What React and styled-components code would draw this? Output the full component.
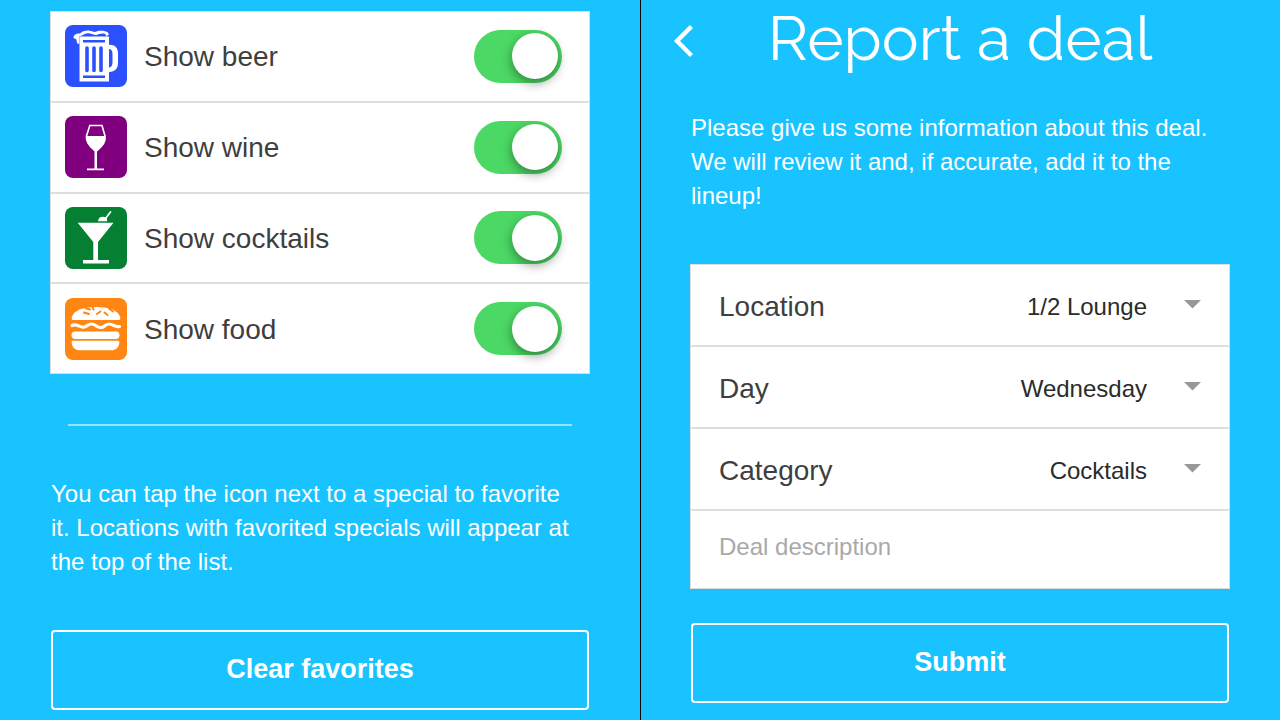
import { useState } from "react";
import styled, { createGlobalStyle } from "styled-components";

const colors = {
  sky: "#18c3ff",
  white: "#ffffff",
  line: "#dedede",
  text: "#3e3e3e",
  value: "#2b2b2b",
  muted: "#a9a9a9",
  caret: "#989898",
  green: "#4cd864",
};

const GlobalStyle = createGlobalStyle`
  *,
  *::before,
  *::after {
    box-sizing: border-box;
  }

  body {
    margin: 0;
    background-color: ${colors.sky};
    font-family: "Liberation Sans", Arial, sans-serif;
  }
`;

const Page = styled.div`
  display: grid;
  grid-template-columns: 1fr 1fr;
  min-height: 100vh;
`;

const Screen = styled.section`
  padding: 11px 50px 9px;
  background-color: ${colors.sky};

  & + & {
    box-shadow: inset 1px 0 #000000;
  }
`;

const Card = styled.div`
  display: grid;
  gap: 2px;
  border: 1px solid ${colors.line};
  background-color: ${colors.line};
`;

const ToggleCard = styled(Card)`
  grid-auto-rows: 1fr;
  min-height: 363px;
`;

const ToggleRow = styled.label`
  display: flex;
  align-items: center;
  gap: 17px;
  padding: 0 27px 0 14px;
  background-color: ${colors.white};
  color: ${colors.text};
  font-size: 28px;
  line-height: 32px;
  cursor: pointer;
`;

const ToggleLabel = styled.span`
  flex: 1;
  padding-top: 2px;
`;

const Tile = styled.svg`
  width: 62px;
  height: 62px;
  border-radius: 8px;
  background-color: ${({ $color }) => $color};
`;

const Switch = styled.input`
  appearance: none;
  display: flex;
  align-items: center;
  width: 88px;
  height: 53px;
  margin: 0;
  padding: 0 4px;
  border-radius: 27px;
  background-color: ${colors.line};
  cursor: pointer;

  &::after {
    content: "";
    width: 46px;
    height: 46px;
    border-radius: 50%;
    background-color: ${colors.white};
    box-shadow: 0 4px 11px rgba(0, 0, 0, 0.4);
  }

  &:checked {
    justify-content: flex-end;
    background-color: ${colors.green};
  }
`;

const Divider = styled.hr`
  height: 2px;
  margin: 50px 18px 51px;
  border: 0;
  background-color: rgba(255, 255, 255, 0.55);
`;

const Copy = styled.p`
  margin: 0 10px 51px 1px;
  color: ${colors.white};
  font-size: 24px;
  line-height: 34px;
`;

const OutlineButton = styled.button`
  display: block;
  width: calc(100% - 2px);
  height: 80px;
  margin: 0 1px;
  padding: 0 0 2px;
  border: 2px solid ${colors.white};
  border-radius: 4px;
  background-color: transparent;
  color: ${colors.white};
  font-family: inherit;
  font-size: 27px;
  font-weight: 700;
  line-height: 32px;
  cursor: pointer;
`;

const Header = styled.header`
  display: grid;
  grid-template-columns: 20px 1fr 20px;
  align-items: center;
  height: 60px;
  margin: 0 -17px 40px;
`;

const BackButton = styled.button`
  display: flex;
  padding: 0;
  border: 0;
  background-color: transparent;
  cursor: pointer;
`;

const Title = styled.h1`
  margin: 0;
  padding-bottom: 4px;
  color: ${colors.white};
  font-family: Raleway, "Open Sans", sans-serif;
  font-size: 62px;
  font-weight: 400;
  line-height: 56px;
  text-align: center;
`;

const FormCard = styled(Card)`
  margin-bottom: 34px;
`;

const Field = styled.div`
  display: flex;
  align-items: center;
  height: 80px;
  padding: 4px 28px 0;
  background-color: ${colors.white};
`;

const FieldLabel = styled.label`
  color: ${colors.text};
  font-size: 28px;
  line-height: 32px;
`;

const Select = styled.select`
  appearance: none;
  flex: 1;
  min-width: 0;
  padding: 0;
  border: 0;
  background-color: transparent;
  color: ${colors.value};
  font-family: inherit;
  font-size: 24px;
  line-height: 32px;
  text-align-last: right;
`;

const Caret = styled.svg`
  width: 17px;
  height: 9px;
  margin: 0 0 6px 37px;
  fill: ${colors.caret};
`;

const DescriptionInput = styled.input`
  width: 100%;
  height: 77px;
  padding: 0 28px 6px;
  border: 0;
  border-radius: 0;
  background-color: ${colors.white};
  color: ${colors.value};
  font-family: inherit;
  font-size: 24px;

  &::placeholder {
    color: ${colors.muted};
    opacity: 1;
  }
`;

const BeerIcon = () => (
  <Tile $color="#2b50ff" viewBox="0 0 62 62" aria-hidden="true">
    <path
      d="M8.500 13C8.500 10 11 8.300 15 8.600C17 6.500 20.500 5.200 24 5.600C26.500 6 28.500 7.200 30 7C33 5.500 37 5.600 40 6.200C42.500 6.700 44 8 43.700 10L41 11L40.500 9C37 7.800 34 9 31.500 10C27.500 10 25.500 8 22.500 8.300C19 8.600 17.500 11 14.300 11.300V19L12 18.200L11.500 14.500Z"
      fill="#fff"
    />
    <path d="M14.500 11.500H44V19.700C50 19.500 53 23 53 28V38C53 43.500 50 47 44 47V56.500H14.500ZM44 24V42.500C46.500 42.500 47.500 40 47.500 37V29C47.500 26 46.500 24 44 24Z" fill="#fff" fillRule="evenodd" />
    <path
      d="M18 16.200H40M18 51.800H40"
      stroke="#2b50ff"
      strokeWidth="2.400"
    />
    <path
      d="M22 23V45.500M29 23V45.500M36 23V45.500"
      stroke="#2b50ff"
      strokeWidth="3.600"
      strokeLinecap="round"
    />
  </Tile>
);

const WineIcon = () => (
  <Tile $color="#800080" viewBox="0 0 62 62" aria-hidden="true">
    <path
      d="M24.800 9.500H37L40 20C41 26 38 30 32 34.500H29.500C24 30 20.500 26 21.500 20Z"
      fill="none"
      stroke="#fff"
      strokeWidth="1.600"
    />
    <path d="M21.500 20H40C41 26 38 30 32 34.500V52.500H39V54.300H22V52.500H29.500V34.500C24 30 20.500 26 21.500 20Z" fill="#fff" />
  </Tile>
);

const CocktailIcon = () => (
  <Tile $color="#058033" viewBox="0 0 62 62" aria-hidden="true">
    <path d="M12.700 15.800H48.500L33 35V53H44V56.500H18V53H28.300V35Z" fill="#fff" />
    <path d="M33 14.300C33 11.500 35 9.700 38 9.800L42 10.500V14.300Z" fill="#fff" />
    <path d="M40.500 11.500L45.500 5" stroke="#fff" strokeWidth="1.800" strokeLinecap="round" />
  </Tile>
);

const BurgerIcon = () => (
  <Tile $color="#ff8613" viewBox="0 0 62 62" aria-hidden="true">
    <path d="M8 22C6.500 22 6.500 20 7 18.500C9.500 12 19 9 31 9C43 9 52.500 12 55 18.500C55.500 20 55.500 22 54 22Z" fill="#fff" />
    <path
      d="M19 14.500L24 16M20.500 10L25 11.500M27.500 8.500L28.500 11.500M32 16L35.500 13.500M39.500 14.500L42.500 17M44 10.500L48 13.500"
      stroke="#ff8613"
      strokeWidth="2"
      strokeLinecap="round"
    />
    <path
      d="M7 27.500C11.500 25 14 29.500 18.500 29.200C22 29 22.500 26 26.500 26C31 26 31 29.500 35.500 29.500C40 29.500 40 26 44 26C48.500 26 49 29.500 54.500 28.500"
      fill="none"
      stroke="#fff"
      strokeWidth="3.200"
      strokeLinecap="round"
    />
    <rect x="6.500" y="33.500" width="48" height="7.500" rx="3.700" fill="#fff" />
    <path d="M8 42.800H53C54.500 42.800 54.500 44 54.200 45.500C53.500 50 50.500 52.300 46 52.300H15C10.500 52.300 7.500 50 6.800 45.500C6.500 44 6.500 42.800 8 42.800Z" fill="#fff" />
  </Tile>
);

const categories = [
  { name: "beer", Icon: BeerIcon },
  { name: "wine", Icon: WineIcon },
  { name: "cocktails", Icon: CocktailIcon },
  { name: "food", Icon: BurgerIcon },
];

const SelectField = ({ id, label, value }) => (
  <Field>
    <FieldLabel htmlFor={id}>{label}</FieldLabel>
    <Select id={id} defaultValue={value}>
      <option>{value}</option>
    </Select>
    <Caret viewBox="0 0 17 9" aria-hidden="true">
      <path d="M0 0H17L8.500 8.500Z" />
    </Caret>
  </Field>
);

const Settings = () => {
  const [shown, setShown] = useState({
    beer: true,
    wine: true,
    cocktails: true,
    food: true,
  });

  return (
    <Screen>
      <ToggleCard>
        {categories.map(({ name, Icon }) => (
          <ToggleRow key={name}>
            <Icon />
            <ToggleLabel>Show {name}</ToggleLabel>
            <Switch
              type="checkbox"
              checked={shown[name]}
              onChange={() => setShown({ ...shown, [name]: !shown[name] })}
            />
          </ToggleRow>
        ))}
      </ToggleCard>
      <Divider />
      <Copy>
        You can tap the icon next to a special to favorite it. Locations with
        favorited specials will appear at the top of the list.
      </Copy>
      <OutlineButton type="button">Clear favorites</OutlineButton>
    </Screen>
  );
};

const ReportDeal = () => (
  <Screen>
    <Header>
      <BackButton type="button" aria-label="Back">
        <svg width="20" height="34" viewBox="0 0 20 34" aria-hidden="true">
          <path d="M18.500 2.500L4 17L18.500 31.500" fill="none" stroke="#fff" strokeWidth="4.400" />
        </svg>
      </BackButton>
      <Title>Report a deal</Title>
    </Header>
    <Copy>
      Please give us some information about this deal. We will review it and,
      if accurate, add it to the lineup!
    </Copy>
    <form onSubmit={(e) => e.preventDefault()}>
      <FormCard>
        <SelectField id="location" label="Location" value="1/2 Lounge" />
        <SelectField id="day" label="Day" value="Wednesday" />
        <SelectField id="category" label="Category" value="Cocktails" />
        <DescriptionInput
          type="text"
          placeholder="Deal description"
          aria-label="Deal description"
        />
      </FormCard>
      <OutlineButton type="submit">Submit</OutlineButton>
    </form>
  </Screen>
);

const App = () => {
  return (
    <>
      <GlobalStyle />
      <Page>
        <Settings />
        <ReportDeal />
      </Page>
    </>
  );
};

export default App;
